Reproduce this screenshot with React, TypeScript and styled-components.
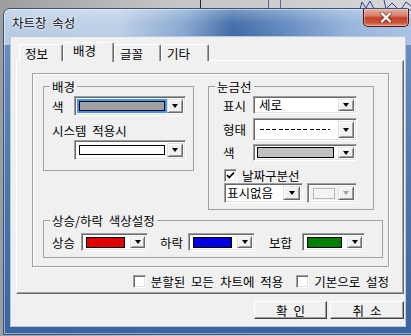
import React from "react";
import styled, { createGlobalStyle } from "styled-components";

const GlobalStyle = createGlobalStyle`
  html, body { margin: 0; padding: 0; }
  body {
    font-family: "Noto Sans CJK KR", "Noto Sans", sans-serif;
    font-size: 12.5px;
    word-spacing: 3px;
    color: #000;
  }
  * { box-sizing: border-box; }
`;

const Desktop = styled.div`
  position: relative;
  width: 411px;
  height: 336px;
  overflow: hidden;
  padding: 8px 0 0 3px;
  background: linear-gradient(90deg, #9d9d9d 0%, #c4c4c4 40%, #d6d6d6 100%);
`;

const ChartScrap = styled.svg`
  position: absolute;
  left: 0;
  top: 0;
`;

const Window = styled.div`
  position: relative;
  width: 410px;
  height: 327px;
  display: flex;
  flex-direction: column;
  padding: 0 6px 7px 6px;
  border: 1px solid #34557f;
  border-radius: 7px 7px 0 0;
  box-shadow: inset 0 0 0 1px rgba(255, 255, 255, 0.45);
  background:
    linear-gradient(180deg, rgba(255, 255, 255, 0.3) 0, rgba(255, 255, 255, 0.05) 14px, rgba(255, 255, 255, 0) 28px),
    linear-gradient(90deg, #b6cbe4 0%, #bccfe6 28%, #86a6d0 44%, #3f6ba7 56%, #5e86bd 68%, #93b2da 84%, #a9c3e3 100%) 0 0 / 100% 36px no-repeat,
    linear-gradient(180deg, #6f93c2 0%, #4f77ad 50%, #3b64a0 100%);
`;

const TitleBar = styled.div`
  height: 27px;
  display: flex;
  align-items: flex-start;
  justify-content: space-between;
  padding-left: 2px;
`;

const Title = styled.div`
  margin-top: 7px;
  line-height: 13px;
  color: #101010;
  text-shadow: 0 0 5px rgba(255, 255, 255, 0.9), 0 0 2px rgba(255, 255, 255, 0.8);
`;

const CloseButton = styled.div`
  width: 46px;
  height: 18px;
  margin-right: -3px;
  display: flex;
  align-items: center;
  justify-content: center;
  border: 1px solid #4a1410;
  border-top: none;
  border-radius: 0 0 5px 5px;
  background: linear-gradient(180deg, #e7b0a4 0%, #d87c68 40%, #c4412a 52%, #c9533a 80%, #e09078 100%);
  box-shadow: inset 0 0 0 1px rgba(255, 220, 210, 0.45);
`;

const Client = styled.div`
  height: 291px;
  display: flex;
  flex-direction: column;
  padding: 5px 1px 0 5px;
  background: #f0f0f0;
  border: 1px solid #b9c9dc;
`;

const TabStrip = styled.div`
  height: 19px;
  display: flex;
  align-items: flex-end;
  padding-left: 3px;
  margin-bottom: -1px;
  position: relative;
  z-index: 1;
`;

const Tab = styled.div<{ $w: number; $active?: boolean }>`
  width: ${(p) => p.$w}px;
  height: ${(p) => (p.$active ? 20 : 17)}px;
  margin-bottom: ${(p) => (p.$active ? -1 : 0)}px;
  padding: ${(p) => (p.$active ? "1px 0 0 9px" : "2px 0 0 5px")};
  line-height: 13px;
  background: #f0f0f0;
  border-top: 1px solid #fff;
  border-left: 1px solid #fff;
  border-right: 1px solid #696969;
  border-radius: 2px 2px 0 0;
  box-shadow: inset -1px 0 0 #a0a0a0;
`;

const Panel = styled.div`
  width: 388px;
  height: 234px;
  display: flex;
  flex-direction: column;
  align-items: flex-start;
  padding: 12px 14px 0 15px;
  border-top: 1px solid #fff;
  border-left: 1px solid #fff;
  border-right: 1px solid #696969;
  border-bottom: 1px solid #696969;
  box-shadow: inset -1px -1px 0 #a0a0a0;
`;

const OuterGroup = styled.div`
  width: 357px;
  height: 194px;
  padding: 6px 0 0 10px;
  border: 1px solid #a0a0a0;
  box-shadow: inset 1px 1px 0 #fff, 1px 1px 0 #fff;
`;

const TopRow = styled.div`
  display: flex;
  align-items: flex-start;
  gap: 14px;
`;

const Group = styled.fieldset<{ $w: number; $h: number; $mt?: number }>`
  width: ${(p) => p.$w}px;
  height: ${(p) => p.$h}px;
  margin: ${(p) => p.$mt ?? 0}px 0 0 0;
  padding: 0;
  min-width: 0;
  border: 1px solid #a0a0a0;
`;

const Legend = styled.legend`
  margin-left: 6px;
  padding: 0 2px;
  line-height: 13px;
`;

const GroupBody = styled.div<{ $pl: number; $pt: number }>`
  padding: ${(p) => p.$pt}px 0 0 ${(p) => p.$pl}px;
  display: flex;
  flex-direction: column;
  align-items: flex-start;
`;

const FieldRow = styled.div<{ $mt?: number }>`
  display: flex;
  align-items: center;
  margin-top: ${(p) => p.$mt ?? 0}px;
`;

const Label = styled.span<{ $w?: number; $ml?: number }>`
  width: ${(p) => (p.$w ? `${p.$w}px` : "auto")};
  margin-left: ${(p) => p.$ml ?? 0}px;
  line-height: 13px;
  white-space: nowrap;
  flex: none;
`;

const Combo = styled.div<{ $w: number; $h: number; $ml?: number }>`
  width: ${(p) => p.$w}px;
  height: ${(p) => p.$h}px;
  margin-left: ${(p) => p.$ml ?? 0}px;
  display: flex;
  flex: none;
  padding: 2px;
  background: #fff;
  border-top: 1px solid #a0a0a0;
  border-left: 1px solid #a0a0a0;
  border-right: 1px solid #fff;
  border-bottom: 1px solid #fff;
  box-shadow: inset 1px 1px 0 #696969, inset -1px -1px 0 #e3e3e3;
`;

const Field = styled.div<{ $pad: string; $bg?: string }>`
  flex: 1;
  display: flex;
  align-items: center;
  padding: ${(p) => p.$pad};
  background: ${(p) => p.$bg ?? "transparent"};
  line-height: 12px;
  white-space: nowrap;
`;

const Swatch = styled.div<{ $color: string; $border?: string }>`
  flex: 1;
  align-self: stretch;
  background: ${(p) => p.$color};
  border: 1px solid ${(p) => p.$border ?? "#000"};
`;

const Dashes = styled.div`
  width: 70px;
  height: 1px;
  background: repeating-linear-gradient(90deg, #000 0 4px, transparent 4px 6.2px);
`;

const DropButton = styled.div<{ $disabled?: boolean; $w?: number }>`
  width: ${(p) => p.$w ?? 16}px;
  flex: none;
  display: flex;
  align-items: center;
  justify-content: center;
  background: #f0f0f0;
  border-top: 1px solid #e3e3e3;
  border-left: 1px solid #e3e3e3;
  border-right: 1px solid #696969;
  border-bottom: 1px solid #696969;
  box-shadow: inset 1px 1px 0 #fff, inset -1px -1px 0 #a0a0a0;

  &::after {
    content: "";
    border-left: 3.5px solid transparent;
    border-right: 3.5px solid transparent;
    border-top: 4px solid ${(p) => (p.$disabled ? "#a0a0a0" : "#000")};
  }
`;

const Box = styled.span`
  width: 13px;
  height: 13px;
  flex: none;
  display: inline-flex;
  align-items: center;
  justify-content: center;
  background: #fff;
  border-top: 1px solid #a0a0a0;
  border-left: 1px solid #a0a0a0;
  border-right: 1px solid #fff;
  border-bottom: 1px solid #fff;
  box-shadow: inset 1px 1px 0 #696969, inset -1px -1px 0 #e3e3e3;
`;

const Check = styled.label<{ $ml?: number }>`
  display: flex;
  align-items: center;
  gap: 5px;
  margin-left: ${(p) => p.$ml ?? 0}px;
  line-height: 13px;
  white-space: nowrap;
`;

const BottomChecks = styled.div`
  align-self: flex-end;
  display: flex;
  align-items: center;
  margin-top: 8px;
`;

const ButtonRow = styled.div`
  display: flex;
  justify-content: flex-end;
  gap: 3px;
  margin-top: 7px;
`;

const PushButton = styled.div<{ $w: number }>`
  width: ${(p) => p.$w}px;
  height: 18px;
  display: flex;
  align-items: center;
  justify-content: center;
  line-height: 13px;
  background: #f0f0f0;
  border-top: 1px solid #fff;
  border-left: 1px solid #fff;
  border-right: 1px solid #404040;
  border-bottom: 1px solid #404040;
  box-shadow: inset -1px -1px 0 #a0a0a0;
`;

const Tick = () => (
  <svg width="9" height="9" viewBox="0 0 9 9">
    <polyline points="1,4 3.3,6.5 8,1.5" fill="none" stroke="#000" strokeWidth="1.8" />
  </svg>
);

const ColorCombo = ({ color, w }: { color: string; w: number }) => (
  <Combo $w={w} $h={18}>
    <Field $pad="1px 5px 0 2px">
      <Swatch $color={color} />
    </Field>
    <DropButton $w={15} />
  </Combo>
);

export default function App() {
  return (
    <>
      <GlobalStyle />
      <Desktop>
        <ChartScrap width="411" height="10" viewBox="0 0 411 10">
          <line x1="200.5" y1="0" x2="200.5" y2="10" stroke="#222" />
          <line x1="268.5" y1="0" x2="268.5" y2="10" stroke="#5a6aa0" />
          <line x1="280.5" y1="0" x2="280.5" y2="10" stroke="#5a6aa0" />
          <path d="M360 9 L362 2 L366 8 L370 1 L374 9 M384 0 L386 9 L392 3 L398 9 M402 8 L406 2 L411 6" fill="none" stroke="#2a3fb0" />
        </ChartScrap>
        <Window>
          <TitleBar>
            <Title>차트창 속성</Title>
            <CloseButton>
              <svg width="14" height="11" viewBox="0 0 14 11">
                <path d="M3 1.5 L11 9.5 M11 1.5 L3 9.5" stroke="#5a1a12" strokeWidth="4" strokeLinecap="round" opacity="0.55" />
                <path d="M3 1.5 L11 9.5 M11 1.5 L3 9.5" stroke="#fff" strokeWidth="2.4" strokeLinecap="round" />
              </svg>
            </CloseButton>
          </TitleBar>
          <Client>
            <TabStrip>
              <Tab $w={44}>정보</Tab>
              <Tab $w={51} $active>배경</Tab>
              <Tab $w={47}>글꼴</Tab>
              <Tab $w={48}>기타</Tab>
            </TabStrip>
            <Panel>
              <OuterGroup>
                <TopRow>
                  <Group $w={151} $h={91}>
                    <Legend>배경</Legend>
                    <GroupBody $pl={8} $pt={3}>
                      <FieldRow>
                        <Label $w={22}>색</Label>
                        <Combo $w={112} $h={20}>
                          <Field $pad="2px" $bg="#3399ff">
                            <Swatch $color="#a0a0a0" />
                          </Field>
                          <DropButton $w={16} />
                        </Combo>
                      </FieldRow>
                      <FieldRow $mt={8}>
                        <Label>시스템 적용시</Label>
                      </FieldRow>
                      <FieldRow $mt={3}>
                        <Combo $w={112} $h={20} $ml={22}>
                          <Field $pad="2px">
                            <Swatch $color="#fff" />
                          </Field>
                          <DropButton $w={16} />
                        </Combo>
                      </FieldRow>
                    </GroupBody>
                  </Group>
                  <Group $w={166} $h={130}>
                    <Legend>눈금선</Legend>
                    <GroupBody $pl={14} $pt={3}>
                      <FieldRow>
                        <Label $w={30}>표시</Label>
                        <Combo $w={104} $h={18}>
                          <Field $pad="0 0 0 3px">세로</Field>
                          <DropButton $w={16} />
                        </Combo>
                      </FieldRow>
                      <FieldRow $mt={4}>
                        <Label $w={30}>형태</Label>
                        <Combo $w={104} $h={23}>
                          <Field $pad="0 0 0 4px">
                            <Dashes />
                          </Field>
                          <DropButton $w={16} />
                        </Combo>
                      </FieldRow>
                      <FieldRow $mt={3}>
                        <Label $w={30}>색</Label>
                        <Combo $w={104} $h={17}>
                          <Field $pad="0 4px 0 1px">
                            <Swatch $color="#c0c0c0" />
                          </Field>
                          <DropButton $w={16} />
                        </Combo>
                      </FieldRow>
                      <FieldRow $mt={8}>
                        <Check $ml={1}>
                          <Box>
                            <Tick />
                          </Box>
                          날짜구분선
                        </Check>
                      </FieldRow>
                      <FieldRow $mt={1}>
                        <Combo $w={79} $h={20} $ml={1}>
                          <Field $pad="0">표시없음</Field>
                          <DropButton $w={17} />
                        </Combo>
                        <Combo $w={50} $h={20} $ml={4}>
                          <Field $pad="2px 3px 1px 3px" $bg="#f0f0f0">
                            <Swatch $color="#f4f4f4" $border="#b8b8b8" />
                          </Field>
                          <DropButton $w={16} $disabled />
                        </Combo>
                      </FieldRow>
                    </GroupBody>
                  </Group>
                </TopRow>
                <Group $w={340} $h={44} $mt={4}>
                  <Legend>상승/하락 색상설정</Legend>
                  <GroupBody $pl={8} $pt={6}>
                    <FieldRow>
                      <Label $w={29}>상승</Label>
                      <ColorCombo color="#e00000" w={67} />
                      <Label $w={28} $ml={12}>하락</Label>
                      <ColorCombo color="#0000e0" w={67} />
                      <Label $w={33} $ml={14}>보합</Label>
                      <ColorCombo color="#008000" w={63} />
                    </FieldRow>
                  </GroupBody>
                </Group>
              </OuterGroup>
              <BottomChecks>
                <Check>
                  <Box />
                  분할된 모든 차트에 적용
                </Check>
                <Check $ml={13}>
                  <Box />
                  기본으로 설정
                </Check>
              </BottomChecks>
            </Panel>
            <ButtonRow>
              <PushButton $w={73}>확 인</PushButton>
              <PushButton $w={74}>취 소</PushButton>
            </ButtonRow>
          </Client>
        </Window>
      </Desktop>
    </>
  );
}
